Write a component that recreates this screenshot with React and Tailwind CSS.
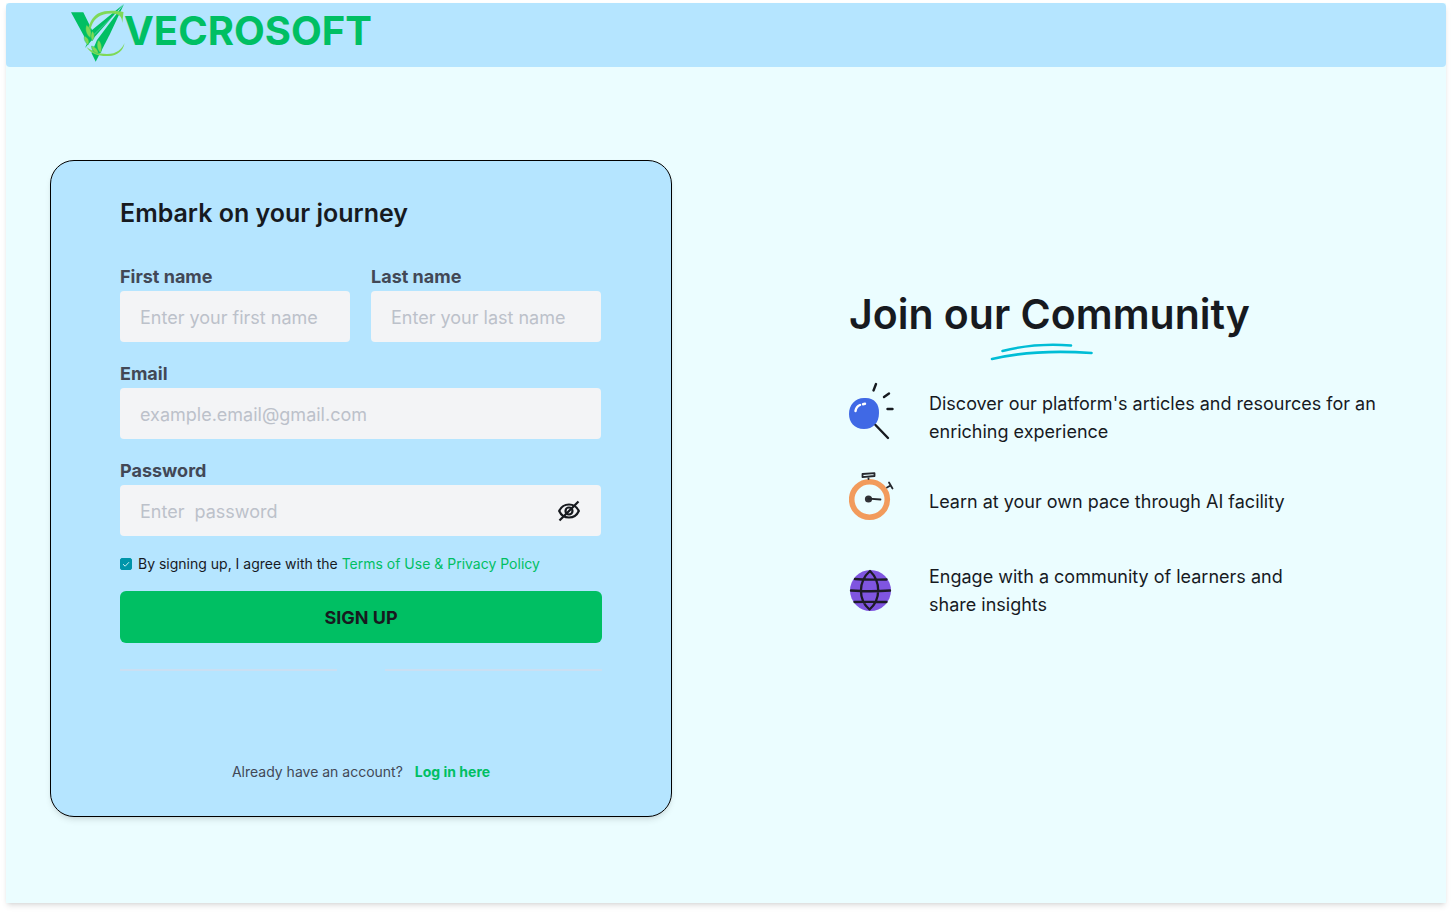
import { useState } from "react";

function Logo() {
  return (
    <svg viewBox="0 0 56 60" className="h-[60px] w-14 shrink-0" aria-hidden="true">
      <path d="M1 9.300H13.300L22 27 53.500 1.300 15 45 17.500 39.500Z" fill="#00bf63" />
      <path d="M54 1 27 37 21.500 50 25.700 58.700 40 31Z" fill="#00bf63" />
      <path d="M24 31 50 6 20 36Z" fill="#b5e5ff" opacity=".45" />
      <path
        d="M52.300 20C52 14 50 10.800 42 10.500 31 10 24.500 15 21.500 23 20.500 26 20 29 20.200 32L18 30C18 22 22 14 28 10.500 34 7.500 43 7.500 48 8.300 50 8.500 51.500 8.500 53.500 9Z"
        fill="#7ed957"
      />
      <path
        d="M16.500 44C22 48 28 51 37 51 47 51 52 46 54.500 40 53.500 48 47 52.500 39 53 29 53.500 21 51 16.500 44Z"
        fill="#7ed957"
      />
      <g fill="#7ed957" stroke="#00bf63" strokeWidth=".4">
        <path d="M16.500 22C21 25 22 30 20.500 35 16.500 32 14.500 27 16.500 22Z" />
        <path d="M22.500 28C25 31 25 35 22 38 20.500 34 20.500 31 22.500 28Z" />
        <path d="M14.500 33C18.500 35 20 38 18 42 15 39 13.500 36 14.500 33Z" />
        <path d="M28.500 37C32 40 32.500 46 30.500 50 27 47 26 41 28.500 37Z" />
        <path d="M21.500 43C26 44 28 47 28.500 50.500 24 50 21.500 47 21.500 43Z" />
      </g>
    </svg>
  );
}

function Magnifier() {
  return (
    <svg viewBox="0 0 48 64" className="h-16 w-12 shrink-0 overflow-visible" aria-hidden="true">
      <path
        d="M15 12C25 11 30.500 18 30 27 30 37 24 43 15 43 5 43 0 36 0 28 0 19 6 12 15 12Z"
        fill="#4069e5"
      />
      <path d="M6.500 25C7 22 8.500 20 11 19M14 18.200 16 17.800" fill="none" stroke="#fff" strokeWidth="2.400" strokeLinecap="round" />
      <path
        d="M26.500 39 39 52M24.500 4.500 27-2M35 11 40 7.500M38.500 23H43.500"
        fill="none"
        stroke="#171a1f"
        strokeWidth="2.400"
        strokeLinecap="round"
      />
    </svg>
  );
}

function Stopwatch() {
  return (
    <svg viewBox="0 0 48 64" className="h-16 w-12 shrink-0" aria-hidden="true">
      <circle cx="20.500" cy="29.500" r="17.800" fill="none" stroke="#f29b5c" strokeWidth="5.600" />
      <circle cx="19.500" cy="29" r="3.600" fill="#323338" />
      <path
        d="M19.500 28.700 31.500 29.500M19.500 9V7M13.500 4 25.500 3.200V6L13.500 7.200ZM38 17.500 41.500 15.500M40 12.500 43.500 18.500"
        fill="none"
        stroke="#26282d"
        strokeWidth="1.800"
        strokeLinecap="round"
        strokeLinejoin="round"
      />
    </svg>
  );
}

function Globe() {
  return (
    <svg viewBox="0 0 48 64" className="h-16 w-12 shrink-0" aria-hidden="true">
      <circle cx="21.500" cy="31.500" r="20.500" fill="#7f55e0" />
      <path
        d="M21 12C9 22.500 9 40.500 20.500 50.500 32 40.500 32 22.500 21 12ZM6 20C16 21 27 20.500 37.500 20.500M2 31.500C15 32.500 28 32.500 41 31.500M5.500 43C16 42.500 27 43 37.500 43"
        fill="none"
        stroke="#1d1b26"
        strokeWidth="2.300"
        strokeLinecap="round"
        strokeLinejoin="round"
      />
    </svg>
  );
}

function HiddenEye() {
  return (
    <svg viewBox="0 0 24 24" className="size-6" fill="none" stroke="#171a1f" strokeWidth="2.200" aria-hidden="true">
      <path d="M2.200 12C4 8 7.500 5.500 12 5.500S20 8 21.800 12C20 16 16.500 18.500 12 18.500S4 16 2.200 12Z" />
      <circle cx="12" cy="12" r="3.500" />
      <path d="M2.500 21.500 21.500 2.500" />
    </svg>
  );
}

const labelClass = "block text-lg leading-7 font-bold text-[#424856]";
const inputClass =
  "block h-[51px] w-full rounded-sm bg-[#f3f4f6] px-5 pt-0.5 text-lg text-[#171a1f] outline-none placeholder:text-[#bcc1ca] focus:ring-2 focus:ring-[#00bf63]";

function Field({ id, label, children, ...input }) {
  return (
    <div className="min-w-0">
      <label htmlFor={id} className={labelClass}>
        {label}
      </label>
      <div className="relative">
        <input id={id} className={inputClass} {...input} />
        {children}
      </div>
    </div>
  );
}

function SignUpCard() {
  const [visible, setVisible] = useState(false);
  return (
    <section className="rounded-3xl border border-black bg-[#b5e5ff] px-[69px] pt-[34px] pb-8 shadow-md">
      <h1 className="text-[25px] leading-9 font-semibold text-[#171a1f]">Embark on your journey</h1>
      <form className="mt-8" onSubmit={(e) => e.preventDefault()}>
        <div className="flex flex-col gap-[18px] pr-px">
          <div className="grid grid-cols-2 gap-[21px]">
            <Field id="first-name" label="First name" placeholder="Enter your first name" />
            <Field id="last-name" label="Last name" placeholder="Enter your last name" />
          </div>
          <Field id="email" label="Email" type="email" placeholder="example.email@gmail.com" />
          <Field
            id="password"
            label="Password"
            type={visible ? "text" : "password"}
            placeholder="Enter&nbsp; password"
          >
            <button
              type="button"
              aria-label="Show password"
              onClick={() => setVisible(!visible)}
              className="absolute inset-y-0 right-5 flex items-center"
            >
              <HiddenEye />
            </button>
          </Field>
        </div>
        <div className="mt-3.5 flex items-center gap-1.5 text-sm leading-7 text-[#171a1f]">
          <span className="relative flex size-3">
            <input
              id="terms"
              type="checkbox"
              defaultChecked
              className="peer size-3 appearance-none rounded-xs border border-[#0095a9] checked:bg-[#0095a9]"
            />
            <svg
              viewBox="0 0 12 12"
              className="pointer-events-none absolute inset-0 hidden size-3 peer-checked:block"
              fill="none"
              stroke="#c9eef3"
              aria-hidden="true"
            >
              <path d="M3 6.200 5.200 8.200 9 4.200" />
            </svg>
          </span>
          <p>
            <label htmlFor="terms">By signing up, I agree with the </label>
            <a href="#terms" className="text-[#00bf63]">
              Terms of Use &amp; Privacy Policy
            </a>
          </p>
        </div>
        <button
          type="submit"
          className="mt-[13px] h-[52px] w-full rounded-md bg-[#00bf63] pt-0.5 text-lg font-bold text-[#171a1f]"
        >
          SIGN UP
        </button>
      </form>
      <div className="mt-[26px] grid grid-cols-2 gap-12">
        <hr className="h-0.5 border-0 bg-[#cadff2]" />
        <hr className="h-0.5 border-0 bg-[#cadff2]" />
      </div>
      <p className="mt-[89px] flex justify-center gap-3 text-sm leading-6 text-[#424856]">
        Already have an account?
        <a href="#login" className="font-bold text-[#00bf63]">
          Log in here
        </a>
      </p>
    </section>
  );
}

function Community() {
  return (
    <section className="pt-[126px] text-[#171a1f]">
      <h2 className="text-[41px] leading-[56px] font-semibold">Join our Community</h2>
      <svg viewBox="0 0 104 20" className="ml-[141px] h-5 w-[104px]" aria-hidden="true">
        <path
          d="M12.500 9C34 3.500 56 1.500 81 3.500M2 17C34 9.500 66 8.500 101.500 11"
          fill="none"
          stroke="#00bdd6"
          strokeWidth="2.600"
          strokeLinecap="round"
        />
      </svg>
      <ul className="mt-6 text-lg leading-7">
        <li className="flex items-center gap-8">
          <Magnifier />
          <p>Discover our platform's articles and resources for an enriching experience</p>
        </li>
        <li className="mt-5 flex items-center gap-8">
          <Stopwatch />
          <p>Learn at your own pace through AI facility</p>
        </li>
        <li className="mt-[25px] flex items-center gap-8">
          <Globe />
          <p className="max-w-[380px]">Engage with a community of learners and share insights</p>
        </li>
      </ul>
    </section>
  );
}

export default function App() {
  return (
    <div className="min-h-screen bg-white px-1.5 pt-[3px] pb-[9px] font-['Inter',sans-serif]">
      <div className="bg-[#ebfdff] pb-[86px] shadow-md">
        <header className="flex h-16 items-start rounded-sm bg-[#b5e5ff] pl-16">
          <Logo />
          <span className="-ml-0.5 text-[40px] leading-[56px] font-bold text-[#00bf63]">VECROSOFT</span>
        </header>
        <main className="grid grid-cols-[minmax(0,622px)_minmax(0,1fr)] items-start gap-x-[177px] pt-[93px] pr-[70px] pl-11">
          <SignUpCard />
          <Community />
        </main>
      </div>
    </div>
  );
}
